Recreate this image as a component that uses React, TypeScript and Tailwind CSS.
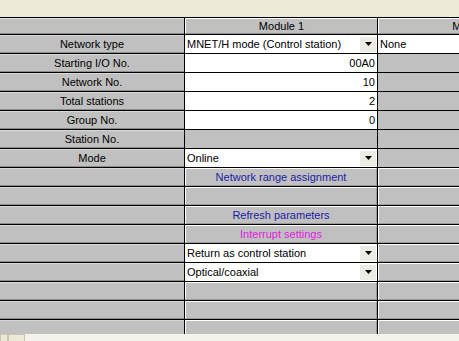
import React from "react";

type Cell =
  | { kind: "flat"; text?: string }
  | { kind: "raised"; text?: string; color?: string }
  | { kind: "input"; text: string }
  | { kind: "select"; text: string };

type Row = { label: string; mod1: Cell; mod2: Cell };

const ROWS: Row[] = [
  { label: "Network type", mod1: { kind: "select", text: "MNET/H mode (Control station)" }, mod2: { kind: "input", text: "None" } },
  { label: "Starting I/O No.", mod1: { kind: "input", text: "00A0" }, mod2: { kind: "flat" } },
  { label: "Network No.", mod1: { kind: "input", text: "10" }, mod2: { kind: "flat" } },
  { label: "Total stations", mod1: { kind: "input", text: "2" }, mod2: { kind: "flat" } },
  { label: "Group No.", mod1: { kind: "input", text: "0" }, mod2: { kind: "flat" } },
  { label: "Station No.", mod1: { kind: "flat" }, mod2: { kind: "flat" } },
  { label: "Mode", mod1: { kind: "select", text: "Online" }, mod2: { kind: "flat" } },
  { label: "", mod1: { kind: "raised", text: "Network range assignment", color: "text-[#1c1ca8]" }, mod2: { kind: "raised" } },
  { label: "", mod1: { kind: "raised" }, mod2: { kind: "raised" } },
  { label: "", mod1: { kind: "raised", text: "Refresh parameters", color: "text-[#1c1ca8]" }, mod2: { kind: "raised" } },
  { label: "", mod1: { kind: "raised", text: "Interrupt settings", color: "text-[#e020e0]" }, mod2: { kind: "raised" } },
  { label: "", mod1: { kind: "select", text: "Return as control station" }, mod2: { kind: "raised" } },
  { label: "", mod1: { kind: "select", text: "Optical/coaxial" }, mod2: { kind: "raised" } },
  { label: "", mod1: { kind: "raised" }, mod2: { kind: "raised" } },
  { label: "", mod1: { kind: "raised" }, mod2: { kind: "raised" } },
  { label: "", mod1: { kind: "raised" }, mod2: { kind: "raised" } },
];

function DropArrow() {
  return (
    <div className="w-[16px] h-[15px] mr-[1px] bg-[#ecebe4] flex items-center justify-center shrink-0">
      <svg width="7" height="4" viewBox="0 0 7 4">
        <path d="M0 0H7L3.5 4Z" fill="#000" />
      </svg>
    </div>
  );
}

function ValueCell({ cell }: { cell: Cell }) {
  switch (cell.kind) {
    case "select":
      return (
        <div className="h-full bg-white flex items-center pl-[2px]">
          <span className="flex-1 truncate">{cell.text}</span>
          <DropArrow />
        </div>
      );
    case "input":
      return (
        <div className={`h-full bg-white flex items-center px-[2px] ${cell.text === "None" ? "justify-start" : "justify-end"}`}>
          {cell.text}
        </div>
      );
    case "raised":
      return (
        <div className={`h-full bg-[#c0c0c0] border-t border-l border-white border-r border-b border-r-[#9a9a9a] border-b-[#9a9a9a] flex items-center justify-center ${cell.color ?? ""}`}>
          {cell.text}
        </div>
      );
    default:
      return <div className="h-full bg-[#c0c0c0]">{cell.text}</div>;
  }
}

export default function App() {
  return (
    <div
      className="w-[459px] h-[341px] overflow-hidden bg-[#ece9d8] text-[11px] leading-none text-black"
      style={{ fontFamily: '"Liberation Sans", Arial, sans-serif' }}
    >
      <div className="h-[18px] border-b border-black" />
      <div className="h-[316px] overflow-hidden">
        {/* header */}
        <div className="flex h-[17px] border-b border-black">
          <div className="w-[185px] shrink-0 border-r border-black">
            <div className="h-full bg-[#c0c0c0] border-t border-[#dedede] border-b border-b-[#8c8c8c]" />
          </div>
          <div className="w-[193px] shrink-0 border-r border-black">
            <div className="h-full bg-[#c0c0c0] border-t border-l border-white border-b border-b-[#8c8c8c] flex items-center justify-center">
              Module 1
            </div>
          </div>
          <div className="w-[193px] shrink-0">
            <div className="h-full bg-[#c0c0c0] border-t border-l border-white border-b border-b-[#8c8c8c] flex items-center justify-center">
              Module 2
            </div>
          </div>
        </div>
        {ROWS.map((row, i) => (
          <div key={i} className="flex h-[19px] border-b border-black">
            <div className="w-[185px] shrink-0 border-r border-black">
              <div className="h-full bg-[#c0c0c0] border-t border-[#d8d8d8] border-b border-b-[#8c8c8c] flex items-center justify-center">
                {row.label}
              </div>
            </div>
            <div className="w-[193px] shrink-0 border-r border-black">
              <ValueCell cell={row.mod1} />
            </div>
            <div className="w-[193px] shrink-0">
              <ValueCell cell={row.mod2} />
            </div>
          </div>
        ))}
      </div>
      <div className="h-[7px] flex bg-[#f4f2ea]">
        <div className="w-[8px] h-full bg-[#ece9d8] border border-b-0 border-[#c8c5b4]" />
        <div className="w-[17px] h-full bg-[#ece9d8] border border-b-0 border-[#c8c5b4]" />
      </div>
    </div>
  );
}
